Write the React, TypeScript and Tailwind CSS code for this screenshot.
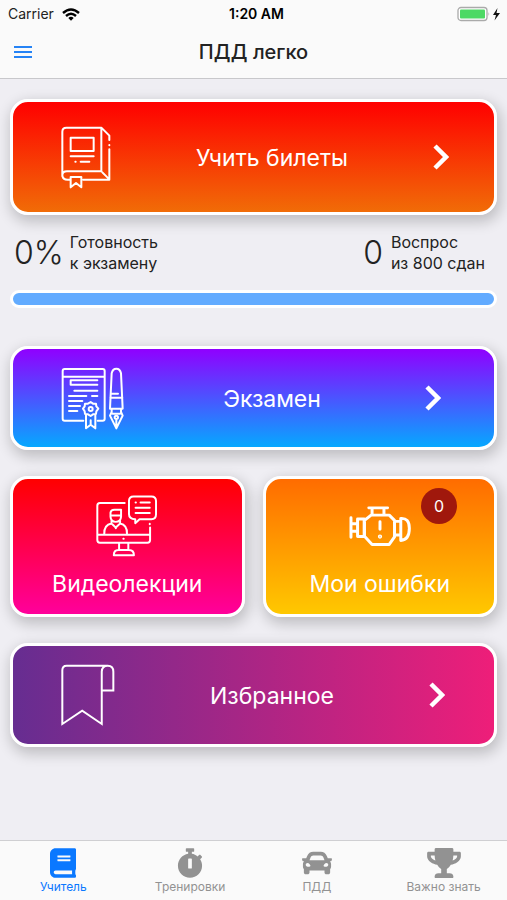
import type { ReactNode } from "react";
import { FaBook, FaCar, FaStopwatch, FaTrophy } from "react-icons/fa";

const CARD =
  "rounded-[18px] border-[3px] border-white text-[23px] text-white shadow-[2px_5px_14px_2px_rgba(0,0,0,0.2)]";

function BookIcon() {
  return (
    <svg viewBox="180 107 150 189" className="h-[63px] w-[50px]" fill="none" stroke="currentColor" strokeWidth="6" strokeLinejoin="round" strokeLinecap="round">
      <path d="M184 258V124Q184 112 196 112H301L325 136V149M325 164V165M325 177V268H246M301 112V243M304 246L325 267M301 243H198Q184 243 184 255Q185 268 200 268H207" />
      <path d="M209 142H278V182H209ZM209 198H278M223 214H224M239 214H265" />
      <path d="M209 260H241V291L225 278L209 291Z" />
    </svg>
  );
}

function ExamIcon() {
  return (
    <svg viewBox="186 93 192 189" className="h-[63px] w-16" fill="none" stroke="currentColor" strokeWidth="6" strokeLinejoin="round" strokeLinecap="round">
      <path d="M253 254H197Q191 254 191 248V105Q191 99 197 99H311Q317 99 317 105V248Q317 254 311 254H296M192 122H316" />
      <path d="M295 133H215V146H295M226 164H295M210 180H262M279 180H295M210 195H250M210 210H243M210 225H235" />
      <path d="M275 198L282 203L291 203L292 211L298 218L292 226L291 234L282 235L275 240L267 235L258 234L257 226L252 218L257 211L258 203L267 203Z" />
      <circle cx="275" cy="219" r="6" />
      <path d="M261 238V277L275 266L289 277V238M275 253V265" />
      <path d="M333 218L338 112Q341 98 352 98Q363 98 366 112L371 218ZM334 185H370M338 173H357" />
      <path d="M338 219V228L333 239L352 277L371 239L366 228V219M341 233H363M352 252V274" />
      <circle cx="352" cy="244" r="5" />
    </svg>
  );
}

function LectureIcon() {
  return (
    <svg viewBox="288 90 188 187" className="h-[62px] w-[62px]" fill="none" stroke="currentColor" strokeWidth="6" strokeLinejoin="round" strokeLinecap="round">
      <path d="M375 114H300Q292 114 292 122V226Q292 234 300 234H444Q452 234 452 226V188M451 177V178M293 210H451M371 222H372" />
      <path d="M313 208Q312 180 335 176L348 188L361 176Q383 180 382 208M335 176V168M361 176V168" />
      <path d="M332 149V143Q333 134 344 134H364V155Q363 171 348 171Q333 171 332 155ZM333 152H363M348 188V190" />
      <path d="M358 235V255M386 235V255M342 272Q342 256 356 256H388Q403 256 403 272Z" />
      <path d="M402 94H456Q470 94 470 108V148Q470 163 456 163H420L407 175V163Q388 162 388 147V108Q388 94 402 94ZM408 112H409M423 112H451M408 128H451M408 144H451" />
    </svg>
  );
}

function EngineIcon() {
  return (
    <svg viewBox="285 120 188 126" className="h-[42px] w-[62px]" fill="none" stroke="currentColor" strokeWidth="9" strokeLinejoin="round" strokeLinecap="round">
      <path d="M291 158V217M293 176H309M293 199H309M311 162H331V215H311ZM332 166L352 150H407L423 166V216L407 239H355L332 214Z" />
      <path d="M345 128H402M355 132V148M391 132V148M425 169H442M425 210H442M442 160V220M442 160Q468 158 468 190Q468 225 442 227V160M379 170V193" />
      <circle cx="379" cy="215" r="2" fill="currentColor" />
    </svg>
  );
}

function BookmarkIcon() {
  return (
    <svg viewBox="187 85 163 187" className="h-[62px] w-[54px]" fill="none" stroke="currentColor" strokeWidth="6">
      <path d="M328 90H204Q191 90 191 104V266L251 226L310 266V108Q311 90 328 90Q345 90 345 108V165H311" />
    </svg>
  );
}

function Chevron() {
  return (
    <svg viewBox="0 0 16 26" className="h-[26px] w-4" fill="none" stroke="currentColor" strokeWidth="4.5">
      <path d="M2 2L13 13L2 24" />
    </svg>
  );
}

type WideCardProps = {
  label: string;
  icon: ReactNode;
  look: string;
  arrowPad: string;
};

function WideCard({ label, icon, look, arrowPad }: WideCardProps) {
  return (
    <button className={`${CARD} ${look} flex w-full items-center pl-12`}>
      <span className="flex w-16 shrink-0">{icon}</span>
      <span className="flex-1 pt-0.5 text-center">{label}</span>
      <span className={`flex w-[75px] shrink-0 ${arrowPad}`}>
        <Chevron />
      </span>
    </button>
  );
}

function StatusBar() {
  return (
    <div className="grid h-7 grid-cols-3 items-center pr-1.5 pl-2 text-sm text-[#222]">
      <div className="flex items-center gap-2">
        <span>Carrier</span>
        <svg viewBox="0 0 18 13" className="h-[13px] w-[18px]" fill="none" stroke="#000" strokeWidth="2.4">
          <path d="M1 5Q9 -2 17 5M4 8Q9 3.500 14 8" />
          <path d="M6.300 10Q9 7.500 11.700 10L9 12.800Z" fill="#000" stroke="none" />
        </svg>
      </div>
      <div className="pl-1 text-center font-semibold text-black">
        <span>1:20 AM</span>
      </div>
      <svg viewBox="0 0 44 16" className="h-4 w-11 justify-self-end">
        <rect x="1" y="1.500" width="29" height="13" rx="3" fill="#fff" stroke="#aaa" strokeWidth="1.300" />
        <rect x="3" y="3.500" width="25" height="9" rx="1" fill="#4cd964" />
        <path d="M31.500 6Q33 8 31.500 10Z" fill="#aaa" />
        <path d="M40.500 2L36 9H39L37.500 14.500L43 7H39.500Z" fill="#111" />
      </svg>
    </div>
  );
}

const TABS = [
  { label: "Учитель", icon: <FaBook className="h-[30px] w-[26px]" />, active: true },
  { label: "Тренировки", icon: <FaStopwatch className="h-[30px] w-[26px]" />, active: false },
  { label: "ПДД", icon: <FaCar className="h-[30px] w-[30px]" />, active: false },
  { label: "Важно знать", icon: <FaTrophy className="h-[30px] w-[34px]" />, active: false },
];

export default function App() {
  return (
    <div className="flex min-h-screen flex-col bg-[#efeef3] font-['Inter','Noto_Sans',sans-serif] text-[#222]">
      <header className="border-b border-[#c8c8cb] bg-[#fafafa] pb-0.5">
        <StatusBar />
        <div className="grid h-12 grid-cols-[40px_1fr_40px] items-center">
          <button aria-label="Меню" className="flex h-full items-center pl-3.5 text-[#2583f5]">
            <svg viewBox="0 0 18 14" className="h-3.5 w-[18px]" stroke="currentColor" strokeWidth="2">
              <path d="M0 2H18M0 7H18M0 12H18" />
            </svg>
          </button>
          <h1 className="text-center text-xl font-medium">ПДД легко</h1>
        </div>
      </header>

      <main className="flex-1 px-2.5 pt-5">
        <WideCard
          label="Учить билеты"
          icon={<BookIcon />}
          look="h-[116px] bg-linear-to-b/srgb from-[#ff0000] to-[#f16c07]"
          arrowPad="pl-3.5"
        />

        <div className="mt-3.5 flex items-center justify-between pr-3 pl-1">
          <div className="flex items-center gap-1.5">
            <span className="text-[32px] font-light">0%</span>
            <p className="text-[16px] leading-[21px]">
              Готовность
              <br />к экзамену
            </p>
          </div>
          <div className="flex items-center gap-2">
            <span className="text-[32px] font-light">0</span>
            <p className="text-[16px] leading-[21px]">
              Воспрос
              <br />
              из 800 сдан
            </p>
          </div>
        </div>

        <div
          role="progressbar"
          aria-label="Готовность к экзамену"
          aria-valuenow={0}
          className="mt-[13px] h-[18px] rounded-full border-[3px] border-white bg-[#62abff]"
        />

        <div className="mt-[38px] flex flex-col gap-[26px]">
          <WideCard
            label="Экзамен"
            icon={<ExamIcon />}
            look="h-[104px] bg-linear-to-b/srgb from-[#9000ff] to-[#06a8ff]"
            arrowPad="pl-1.5"
          />
          <div className="grid grid-cols-2 gap-[18px]">
            <button className={`${CARD} flex h-[141px] flex-col items-center bg-linear-to-b/srgb from-[#ff0000] to-[#ff009b] pt-4`}>
              <LectureIcon />
              <span className="mt-2.5">Видеолекции</span>
            </button>
            <button className={`${CARD} relative flex h-[141px] flex-col items-center bg-linear-to-b/srgb from-[#ff6c00] to-[#ffc800] pt-4`}>
              <span className="flex h-[62px] items-center">
                <EngineIcon />
              </span>
              <span className="mt-2.5">Мои ошибки</span>
              <span className="absolute top-[9px] right-[37px] flex size-9 items-center justify-center rounded-full bg-[#a0180c] text-[16px]">
                0
              </span>
            </button>
          </div>
          <WideCard
            label="Избранное"
            icon={<BookmarkIcon />}
            look="h-[104px] bg-linear-to-r/srgb from-[#662d91] to-[#ee1e79]"
            arrowPad="pl-2.5"
          />
        </div>
      </main>

      <nav className="grid h-[60px] grid-cols-4 border-t border-[#cfcfd2] bg-[#fafafa]">
        {TABS.map((tab) => (
          <a
            key={tab.label}
            href="#"
            aria-current={tab.active ? "page" : undefined}
            className={`flex flex-col items-center gap-px pt-[7px] text-xs ${tab.active ? "text-[#0a78ff]" : "text-[#929292]"}`}
          >
            {tab.icon}
            <span>{tab.label}</span>
          </a>
        ))}
      </nav>
    </div>
  );
}
